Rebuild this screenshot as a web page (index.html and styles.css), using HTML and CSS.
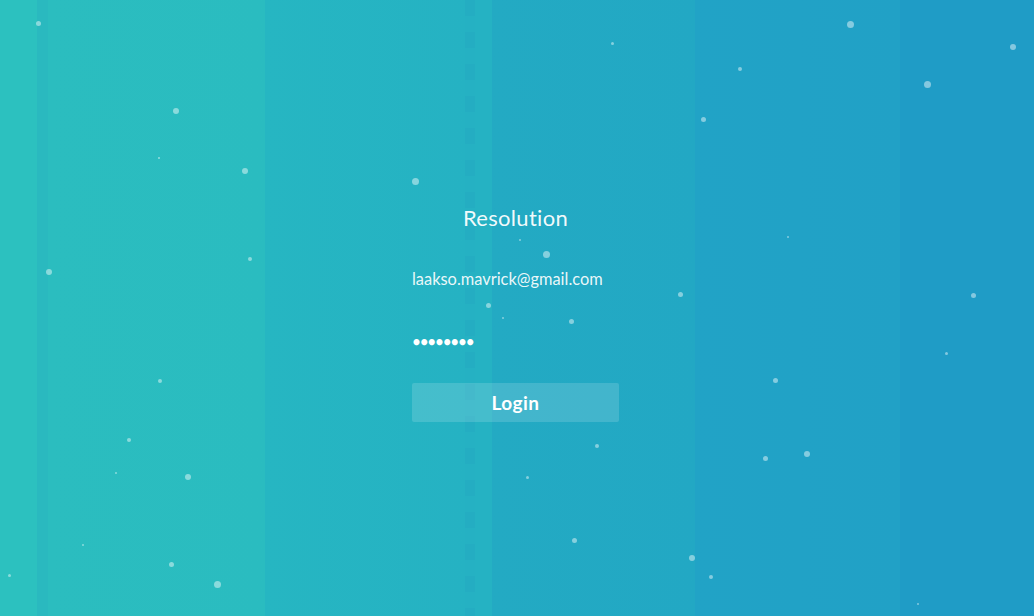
FILE: index.html
```html
<!DOCTYPE html>
<html lang="en">
<head>
<meta charset="utf-8">
<title>Resolution</title>
<link rel="stylesheet" href="styles.css">
</head>
<body>
<div class="scene">
  <div class="stripes">
    <div class="s s1"></div>
    <div class="s s2"></div>
    <div class="s s3"></div>
    <div class="s s4"></div>
    <div class="s s5"></div>
    <div class="s s6"></div>
    <div class="s s7"></div>
    <div class="s s8"></div>
    <div class="s s9"></div>
  </div>
  <div class="dots">
    <span class="dot" style="left:38px;top:23px;--r:2.5px"></span>
    <span class="dot" style="left:176px;top:111px;--r:3px"></span>
    <span class="dot" style="left:245px;top:171px;--r:3px"></span>
    <span class="dot" style="left:415px;top:181px;--r:3.5px"></span>
    <span class="dot" style="left:49px;top:272px;--r:3px"></span>
    <span class="dot" style="left:250px;top:259px;--r:2px"></span>
    <span class="dot" style="left:546px;top:254px;--r:3.5px"></span>
    <span class="dot" style="left:488px;top:305px;--r:2.5px"></span>
    <span class="dot" style="left:571px;top:321px;--r:2.5px"></span>
    <span class="dot" style="left:503px;top:318px;--r:1px"></span>
    <span class="dot" style="left:680px;top:294px;--r:2.5px"></span>
    <span class="dot" style="left:612px;top:43px;--r:1.5px"></span>
    <span class="dot" style="left:740px;top:69px;--r:2px"></span>
    <span class="dot" style="left:850px;top:24px;--r:3.5px"></span>
    <span class="dot" style="left:927px;top:84px;--r:3.5px"></span>
    <span class="dot" style="left:1013px;top:47px;--r:3px"></span>
    <span class="dot" style="left:703px;top:119px;--r:2.5px"></span>
    <span class="dot" style="left:788px;top:237px;--r:1px"></span>
    <span class="dot" style="left:973px;top:295px;--r:2.5px"></span>
    <span class="dot" style="left:946px;top:353px;--r:1.5px"></span>
    <span class="dot" style="left:775px;top:380px;--r:2.5px"></span>
    <span class="dot" style="left:160px;top:381px;--r:2px"></span>
    <span class="dot" style="left:129px;top:440px;--r:2px"></span>
    <span class="dot" style="left:188px;top:477px;--r:3px"></span>
    <span class="dot" style="left:116px;top:473px;--r:1px"></span>
    <span class="dot" style="left:597px;top:446px;--r:2px"></span>
    <span class="dot" style="left:527px;top:477px;--r:1.5px"></span>
    <span class="dot" style="left:765px;top:458px;--r:2.5px"></span>
    <span class="dot" style="left:807px;top:454px;--r:3px"></span>
    <span class="dot" style="left:574px;top:540px;--r:2.5px"></span>
    <span class="dot" style="left:692px;top:558px;--r:3px"></span>
    <span class="dot" style="left:711px;top:577px;--r:2px"></span>
    <span class="dot" style="left:171px;top:564px;--r:2.5px"></span>
    <span class="dot" style="left:217px;top:584px;--r:3.5px"></span>
    <span class="dot" style="left:9px;top:575px;--r:1.5px"></span>
    <span class="dot" style="left:83px;top:545px;--r:1px"></span>
    <span class="dot" style="left:918px;top:604px;--r:1px"></span>
    <span class="dot" style="left:159px;top:158px;--r:0.8px"></span>
    <span class="dot" style="left:520px;top:240px;--r:1px"></span>
  </div>
  <main class="login">
    <h1 class="title">Resolution</h1>
    <div class="field email">laakso.mavrick@gmail.com</div>
    <div class="field password">••••••••</div>
    <button class="btn" type="button">Login</button>
  </main>
</div>
</body>
</html>
```

FILE: styles.css
```css
* { box-sizing: border-box; }
html, body { margin: 0; padding: 0; }
body {
  width: 1034px;
  height: 616px;
  overflow: hidden;
  font-family: Lato, "Open Sans", sans-serif;
}
.scene {
  position: relative;
  width: 1034px;
  height: 616px;
  display: flex;
  justify-content: center;
}
.stripes {
  position: absolute;
  inset: 0;
  display: flex;
}
.s { height: 100%; }
.s1 { width: 37px; background: #2cc1bf; }
.s2 { width: 11px; background: #2ab9bf; }
.s3 { width: 217px; background: linear-gradient(90deg, #2bbdbf, #2abcc0); }
.s4 { width: 200px; background: linear-gradient(90deg, #26b6c2, #25b2c3); }
.s5 { width: 10px; background: repeating-linear-gradient(180deg, #24adc2 0 16px, #25b1c3 16px 32px); }
.s6 { width: 17px; background: #25b2c3; }
.s7 { width: 203px; background: linear-gradient(90deg, #23aac3, #22a8c4); }
.s8 { width: 205px; background: linear-gradient(90deg, #21a3c6, #21a1c6); }
.s9 { flex: 1; background: #1f9cc6; }
.dots { position: absolute; inset: 0; }
.dot {
  position: absolute;
  width: calc(var(--r) * 2);
  height: calc(var(--r) * 2);
  margin-left: calc(var(--r) * -1);
  margin-top: calc(var(--r) * -1);
  border-radius: 50%;
  background: rgba(255, 255, 255, 0.45);
}
.login {
  position: relative;
  width: 207px;
  margin-top: 204px;
  margin-left: -3px;
  display: flex;
  flex-direction: column;
  color: #fff;
}
.title {
  margin: 0;
  text-align: center;
  font-size: 22px;
  font-weight: 400;
  line-height: 28px;
  letter-spacing: 0.3px;
  color: rgba(255, 255, 255, 0.95);
}
.field {
  font-size: 16.4px;
  line-height: 20px;
  color: rgba(255, 255, 255, 0.92);
}
.email { margin-top: 37px; white-space: nowrap; }
.password {
  margin-top: 42px;
  margin-left: -1px;
  height: 24px;
  line-height: 24px;
  font-size: 17px;
  letter-spacing: -3.2px;
  font-family: "DejaVu Sans", sans-serif;
  font-weight: bold;
  color: #fff;
}
.btn {
  margin-top: 28px;
  height: 39px;
  width: 207px;
  border: none;
  border-radius: 2px;
  background: rgba(255, 255, 255, 0.15);
  color: #fff;
  font-family: Lato, "Open Sans", sans-serif;
  font-size: 19px;
  font-weight: 700;
  letter-spacing: 0.4px;
  padding: 0;
}
```
